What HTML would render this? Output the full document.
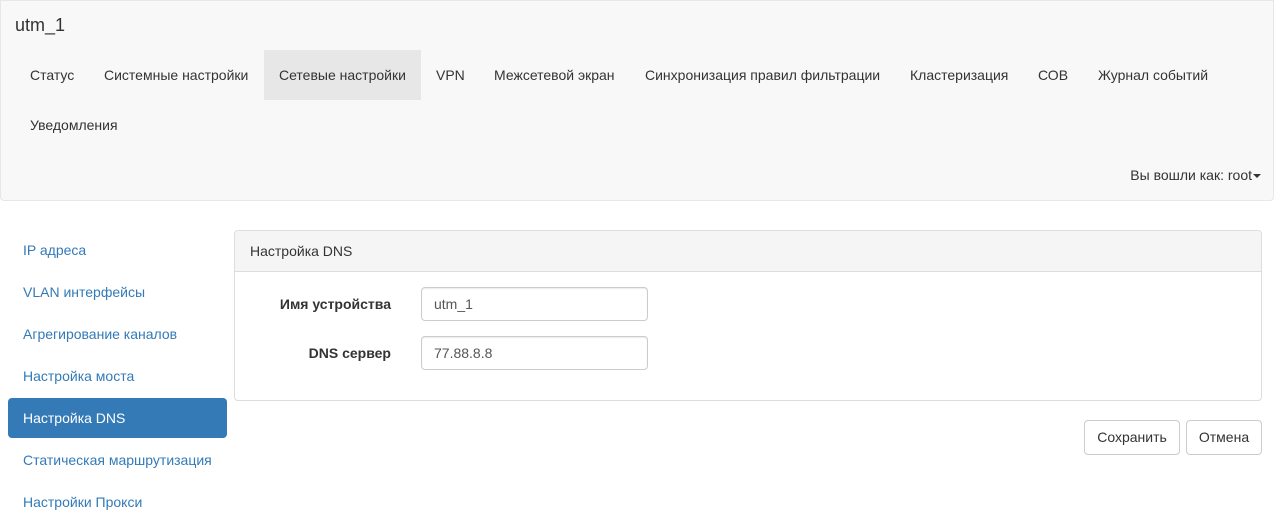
<!DOCTYPE html>
<html><head><meta charset="utf-8"><style>
*{box-sizing:border-box}
body{margin:0;width:1274px;height:522px;overflow:hidden;background:#fff;font:14px "Liberation Sans",Arial,sans-serif;color:#333;position:relative}
.a{position:absolute;white-space:nowrap}
.nav{position:absolute;left:0;top:0;width:1274px;height:201px;background:#f8f8f8;border:1px solid #e7e7e7;border-radius:0 0 4px 4px}
.ni{position:absolute;height:50px;line-height:50px;color:#333}
.side{position:absolute;left:8px;width:219px;height:40px;line-height:40px;padding-left:15px;color:#337ab7;border-radius:4px}
.inp{position:absolute;left:421px;width:227px;height:34px;border:1px solid #ccc;border-radius:4px;padding-left:12px;line-height:32px;color:#555;box-shadow:inset 0 1px 1px rgba(0,0,0,.075)}
.lbl{position:absolute;right:883px;font-weight:bold;line-height:34px}
.btn{position:absolute;top:420px;height:35px;border:1px solid #ccc;border-radius:4px;line-height:33px;text-align:center;background:#fff}
</style></head><body>
<div class="nav"></div>
<div class="a" style="left:15px;top:14px;font-size:18px;line-height:22px">utm_1</div>
<div class="ni" style="left:264px;top:50px;width:157px;background:#e7e7e7"></div>
<div class="ni" style="left:30px;top:50px">Статус</div>
<div class="ni" style="left:104px;top:50px">Системные настройки</div>
<div class="ni" style="left:279px;top:50px">Сетевые настройки</div>
<div class="ni" style="left:436px;top:50px">VPN</div>
<div class="ni" style="left:494px;top:50px">Межсетевой экран</div>
<div class="ni" style="left:645px;top:50px">Синхронизация правил фильтрации</div>
<div class="ni" style="left:910px;top:50px">Кластеризация</div>
<div class="ni" style="left:1038px;top:50px">СОВ</div>
<div class="ni" style="left:1098px;top:50px">Журнал событий</div>
<div class="ni" style="left:30px;top:100px">Уведомления</div>
<div class="a" style="right:13px;top:166px;line-height:18px">Вы вошли как: root<span style="display:inline-block;width:0;height:0;border-top:4px solid #333;border-left:4px solid transparent;border-right:4px solid transparent;vertical-align:middle;margin-left:1px"></span></div>

<div class="side" style="top:230px">IP адреса</div>
<div class="side" style="top:272px">VLAN интерфейсы</div>
<div class="side" style="top:314px">Агрегирование каналов</div>
<div class="side" style="top:356px">Настройка моста</div>
<div class="side" style="top:398px;background:#337ab7;color:#fff">Настройка DNS</div>
<div class="side" style="top:440px">Статическая маршрутизация</div>
<div class="side" style="top:482px">Настройки Прокси</div>

<div style="position:absolute;left:234px;top:230px;width:1028px;height:171px;border:1px solid #ddd;border-radius:4px;overflow:hidden">
<div style="height:41px;background:#f5f5f5;border-bottom:1px solid #ddd;padding-left:15px;line-height:40px">Настройка DNS</div>
</div>
<div class="lbl" style="top:287px">Имя устройства</div>
<div class="inp" style="top:287px">utm_1</div>
<div class="lbl" style="top:336px">DNS сервер</div>
<div class="inp" style="top:336px">77.88.8.8</div>
<div class="btn" style="left:1084px;width:96px">Сохранить</div>
<div class="btn" style="left:1186px;width:76px">Отмена</div>
</body></html>
